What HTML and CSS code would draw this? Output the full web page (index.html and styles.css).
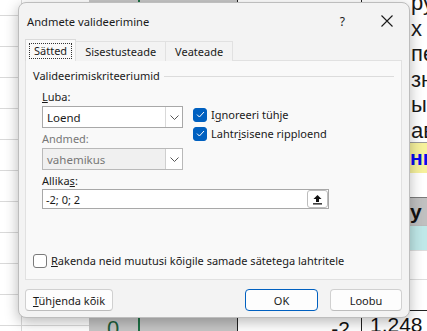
FILE: index.html
```html
<!DOCTYPE html>
<html lang="et">
<head>
<meta charset="utf-8">
<title>Andmete valideerimine</title>
<link rel="stylesheet" href="styles.css">
</head>
<body>
<div class="sheet">
  <div class="col col-a">
    <div class="cell first"></div>
    <div class="cell"></div><div class="cell"></div><div class="cell"></div>
    <div class="cell"></div><div class="cell"></div><div class="cell"></div>
    <div class="cell"></div><div class="cell"></div><div class="cell"></div>
    <div class="cell"></div><div class="cell"></div>
  </div>
  <div class="col col-b">
    <div class="cell first"></div>
    <div class="cell"></div><div class="cell"></div><div class="cell"></div>
    <div class="cell"></div><div class="cell"></div><div class="cell"></div>
    <div class="cell"></div><div class="cell"></div><div class="cell"></div>
    <div class="cell"></div><div class="cell"></div>
  </div>
  <div class="col col-c"><span class="glyph-o">0</span></div>
  <div class="col col-sel"></div>
  <div class="col col-d"></div>
  <div class="col col-e"><div class="bottom-cell num">-2</div></div>
  <div class="col col-f">
    <div class="bigtext">
      <div class="ln">ру</div>
      <div class="ln">х <span class="red">н</span></div>
      <div class="ln">пе</div>
      <div class="ln">зн</div>
      <div class="ln">ы</div>
      <div class="ln">ав</div>
    </div>
    <div class="f-yellow"><span>нк</span></div>
    <div class="f-white1"></div>
    <div class="f-gray"><span>у</span></div>
    <div class="f-cyan"></div>
    <div class="f-white2"></div>
    <div class="f-white3"></div>
    <div class="f-num">1,248</div>
  </div>
</div>

<div class="dialog">
  <div class="titlebar">
    <span class="title">Andmete valideerimine</span>
    <span class="help">?</span>
    <svg class="close" width="12" height="12" viewBox="0 0 12 12"><path d="M0.5 0.5 L11.5 11.5 M11.5 0.5 L0.5 11.5" stroke="#1a1a1a" stroke-width="1.1" fill="none"/></svg>
  </div>
  <div class="tabs">
    <div class="tab active"><span class="focus">Sätted</span></div>
    <div class="tab">Sisestusteade</div>
    <div class="tab">Veateade</div>
  </div>
  <div class="panel">
    <div class="legend"><span>Valideerimiskriteeriumid</span><i class="rule"></i></div>
    <div class="criteria">
      <div class="leftcol">
        <div class="lbl"><u>L</u>uba:</div>
        <div class="select">
          <span class="val">Loend</span>
          <span class="arrow"><svg width="9" height="5" viewBox="0 0 9 5"><path d="M0.5 0.5 L4.5 4.5 L8.5 0.5" stroke="#555" fill="none"/></svg></span>
        </div>
        <div class="lbl dis">Andmed:</div>
        <div class="select disabled">
          <span class="val">vahemikus</span>
          <span class="arrow"><svg width="9" height="5" viewBox="0 0 9 5"><path d="M0.5 0.5 L4.5 4.5 L8.5 0.5" stroke="#555" fill="none"/></svg></span>
        </div>
      </div>
      <div class="rightcol">
        <div class="check"><span class="box on"><svg width="9" height="7" viewBox="0 0 9 7"><path d="M1 3.6 L3.4 6 L8 1" stroke="#fff" stroke-width="1" fill="none"/></svg></span><span>I<u>g</u>noreeri tühje</span></div>
        <div class="check"><span class="box on"><svg width="9" height="7" viewBox="0 0 9 7"><path d="M1 3.6 L3.4 6 L8 1" stroke="#fff" stroke-width="1" fill="none"/></svg></span><span>Lahtr<u>i</u>sisene ripploend</span></div>
      </div>
    </div>
    <div class="source">
      <div class="lbl">Allika<u>s</u>:</div>
      <div class="input">
        <span class="val">-2; 0; 2</span>
        <span class="refbtn"><svg width="11" height="11" viewBox="0 0 11 11"><path d="M5.5 1 L9.5 5 L7 5 L7 8 L4 8 L4 5 L1.5 5 Z" fill="#111"/><rect x="1" y="9.2" width="9" height="1.3" fill="#111"/></svg></span>
      </div>
    </div>
    <div class="check apply"><span class="box"></span><span><u>R</u>akenda neid muutusi kõigile samade sätetega lahtritele</span></div>
  </div>
  <div class="footer">
    <button class="btn clear"><u>T</u>ühjenda kõik</button>
    <span class="grow"></span>
    <button class="btn ok">OK</button>
    <button class="btn">Loobu</button>
  </div>
</div>
</body>
</html>
```

FILE: styles.css
```css
* { box-sizing: border-box; }
html, body { margin: 0; padding: 0; }
body {
  width: 427px;
  height: 331px;
  overflow: hidden;
  position: relative;
  background: #fff;
  font-family: "Noto Sans", "Open Sans", sans-serif;
}

/* ---------- spreadsheet behind ---------- */
.sheet {
  display: flex;
  height: 331px;
}
.col { height: 331px; overflow: hidden; }
.col-a { width: 22px; border-right: 1px solid #d9d9d9; display: flex; flex-direction: column; }
.col-b { width: 67px; display: flex; flex-direction: column; }
.cell { height: 31px; border-bottom: 1px solid #d9d9d9; flex: none; }
.cell.first { height: 16px; }
.col-c { width: 49px; background: #c6c6c6; position: relative; }
.glyph-o {
  position: absolute; left: 18px; top: 318px;
  font: 22px/22px "Liberation Sans", sans-serif; color: #1d5e3a;
}
.col-sel { width: 2px; background: #1e7145; }
.col-d { width: 98px; background: #c6c6c6; border-right: 1px solid #222; }
.col-e { width: 124px; border-right: 1px solid #222; display: flex; flex-direction: column; justify-content: flex-end; }
.bottom-cell { height: 19px; border-top: 1px solid #222; }
.num {
  text-align: right; padding-right: 11px; padding-top: 5px;
  font: 21px/22px "Liberation Sans", sans-serif; color: #111;
  overflow: hidden;
}
.col-f { flex: 1; display: flex; flex-direction: column; font-family: "Liberation Sans", sans-serif; }
.bigtext { padding-left: 49px; font-size: 22px; line-height: 25.6px; color: #1a1a1a; white-space: nowrap; margin-top: -10px; height: 152px; flex: none; }
.bigtext .ln { white-space: nowrap; }
.red { color: #8a1c1c; }
.f-yellow { height: 31px; flex: none; background: #f6f19c; border-top: 1px solid #9a9a9a; padding-left: 48px; font-size: 21px; font-weight: bold; color: #0a0aee; line-height: 29px; white-space: nowrap; }
.f-white1 { height: 25px; flex: none; border-bottom: 1px solid #7a7a7a; }
.f-gray { height: 28px; flex: none; background: #c0c0c0; padding-left: 48px; font-size: 21px; font-weight: bold; line-height: 27px; color: #111; border-bottom: 1px solid #bbb; }
.f-cyan { height: 25px; flex: none; background: #bfe8e8; border-bottom: 1px solid #ddd; }
.f-white2 { height: 29px; flex: none; border-bottom: 1px solid #ddd; }
.f-white3 { height: 31px; flex: none; border-bottom: 1px solid #222; }
.f-num { padding-left: 8px; padding-top: 3px; font-size: 21px; line-height: 22px; color: #111; white-space: nowrap; }

/* ---------- dialog ---------- */
.dialog {
  position: absolute;
  left: 18px; top: 2px;
  width: 392px; height: 316px;
  background: #f3f3f3;
  border: 1px solid #bdbdbd;
  border-radius: 8px;
  box-shadow: 0 4px 14px rgba(0,0,0,0.28);
  padding: 0 7px 0 6px;
  display: flex;
  flex-direction: column;
  font-size: 11px;
  color: #1a1a1a;
}
.titlebar {
  height: 36px;
  display: flex;
  align-items: center;
  padding: 0 0 0 2px;
}
.title { flex: 1; font-size: 11.2px; }
.help { font-size: 12px; margin-right: 36px; }
.close { margin-right: 9px; }

.tabs { display: flex; align-items: flex-end; height: 22px; margin-bottom: -1px; position: relative; z-index: 1; }
.tab {
  height: 20px;
  padding: 0 9px;
  border: 1px solid #e1e1e1;
  border-bottom: none;
  background: #f3f3f3;
  display: flex; align-items: center;
  margin-left: -1px;
}
.tab:first-child { margin-left: 0; }
.tab.active {
  height: 22px;
  background: #f9f9f9;
  border-color: #dadada;
  padding: 0 3px;
}
.focus { border: 1px dotted #333; padding: 0 4px; line-height: 14px; }

.panel {
  height: 220px;
  background: #f9f9f9;
  border: 1px solid #e1e1e1;
  padding: 8px 7px 0 7px;
  display: flex;
  flex-direction: column;
}
.legend { display: flex; align-items: center; gap: 4px; height: 14px; line-height: 14px; }
.rule { flex: 1; height: 1px; background: #dcdcdc; }

.criteria { display: flex; margin: 6px 0 0 9px; }
.leftcol { width: 141px; display: flex; flex-direction: column; }
.lbl { height: 16px; line-height: 16px; }
.lbl.dis { color: #777; margin-top: 3px; }
.select {
  height: 22px;
  margin-top: 1px;
  background: #fff;
  border: 1px solid #a8a8a8;
  display: flex; align-items: center;
}
.select .val { flex: 1; padding-left: 4px; font-size: 11.5px; }
.select .arrow { width: 17px; height: 20px; border-left: 1px solid #d9d9d9; display: flex; align-items: center; justify-content: center; background: #fff; }
.select.disabled { background: #f0f0f0; border-color: #b9b9b9; color: #777; }
.select.disabled .arrow { border-left-color: #cfcfcf; }

.rightcol { margin-left: 10px; padding-top: 16px; display: flex; flex-direction: column; }
.check { display: flex; align-items: center; height: 19px; gap: 4px; white-space: nowrap; }
.box {
  width: 14px; height: 14px; border-radius: 3px;
  border: 1px solid #7a7a7a; background: #fff;
  display: flex; align-items: center; justify-content: center;
  flex: none;
}
.box.on { background: #0060c0; border-color: #0060c0; }

.source { margin: 3px 0 0 9px; display: flex; flex-direction: column; }
.input {
  width: 287px; height: 20px;
  background: #fff; border: 1px solid #a8a8a8;
  display: flex; align-items: center;
}
.input .val { flex: 1; padding-left: 3px; }
.refbtn {
  width: 21px; height: 18px;
  border: 1px solid #bdbdbd; border-radius: 3px; background: #fff;
  display: flex; align-items: center; justify-content: center;
}
.apply { margin-top: auto; margin-bottom: 9px; }

.footer { display: flex; align-items: center; margin-top: 9px; }
.grow { flex: 1; }
.btn {
  height: 22px;
  font: 11px "Noto Sans", "Open Sans", sans-serif;
  color: #1a1a1a;
  background: #fdfdfd;
  border: 1px solid #d0d0d0;
  border-bottom-color: #bcbcbc;
  border-radius: 4px;
  padding: 0;
  width: 72px;
}
.btn.clear { width: 88px; }
.btn.ok { width: 73px; border: 1px solid #0060c0; margin-right: 12px; }
u { text-decoration: underline; text-underline-offset: 1px; }
```
